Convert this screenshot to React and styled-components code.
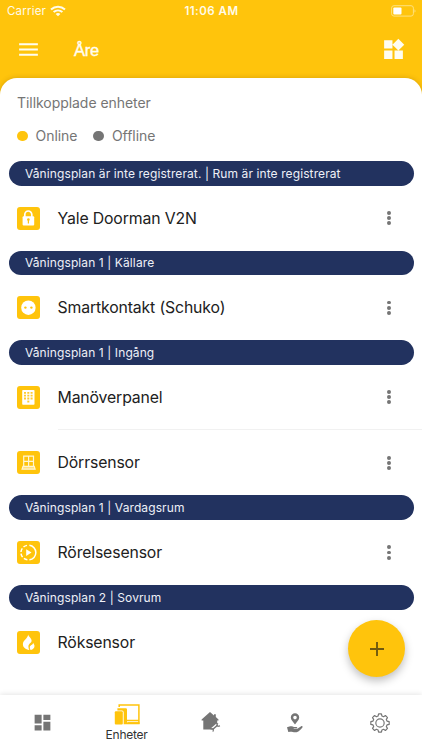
import React from 'react'
import styled, { createGlobalStyle } from 'styled-components'
import { MdMenu, MdWidgets, MdDashboard } from 'react-icons/md'

const GlobalStyle = createGlobalStyle`
    * {
        box-sizing: border-box;
    }
    body {
        margin: 0;
        background-color: #ffc40c;
        font-family: Inter, "Liberation Sans", sans-serif;
    }
`

const Container = styled.div`
    position: relative;
    display: flex;
    flex-direction: column;
    width: 422px;
    height: 750px;
    overflow: hidden;
    background-color: #ffc40c;
`

const StatusBar = styled.div`
    display: grid;
    grid-template-columns: 1fr auto 1fr;
    align-items: center;
    height: 22px;
    padding: 0 6px 0 7px;
    color: #fffbea;
`

const Carrier = styled.div`
    display: flex;
    align-items: center;
    gap: 4px;
    font-size: 11.5px;
    letter-spacing: 0.2px;
`

const Clock = styled.div`
    font-size: 11.5px;
    font-weight: 600;
    letter-spacing: 0.5px;
`

const Battery = styled.div`
    display: flex;
    justify-content: flex-end;
`

const Header = styled.div`
    display: flex;
    align-items: center;
    height: 56px;
    padding: 0 16px 1px;
    color: #fffdf2;
`

const Title = styled.h1`
    flex: 1;
    margin: 2px 0 0 33px;
    font-family: "Liberation Sans", sans-serif;
    font-size: 16.5px;
    font-weight: 400;
    letter-spacing: -0.3px;
    -webkit-text-stroke: 0.4px #fffdf2;
`

const Panel = styled.div`
    flex: 1;
    background-color: #fff;
    border-radius: 17px 17px 0 0;
    box-shadow: 0 0 5px rgba(120, 80, 0, 0.3);
`

const Intro = styled.div`
    height: 83px;
    padding: 16px 17px 0;
    color: #757575;
    font-size: 14px;
    line-height: 18px;
`

const IntroTitle = styled.div`
    letter-spacing: -0.05px;
`

const Legend = styled.div`
    display: flex;
    align-items: center;
    gap: 16px;
    margin-top: 15px;
    letter-spacing: -0.04px;
`

const LegendItem = styled.div`
    display: flex;
    align-items: center;
    gap: 8px;
`

const Dot = styled.span`
    width: 10.5px;
    height: 10.5px;
    border-radius: 50%;
    background-color: ${props => props.$color};
`

const Room = styled.div`
    display: flex;
    align-items: center;
    height: 24.5px;
    margin: 0 8.5px;
    padding: 0 16.5px;
    border-radius: 13px;
    background-color: #22325f;
    color: #eef0f7;
    font-size: 12px;
    letter-spacing: 0.1px;
    white-space: pre;
`

const Device = styled.div`
    display: flex;
    align-items: center;
    height: ${props => props.$divided ? '65.7px' : '65.1px'};
    padding-left: 17px;
`

const Tile = styled.div`
    display: flex;
    align-items: center;
    justify-content: center;
    width: 23px;
    height: 23px;
    margin-right: 17.5px;
    border-radius: 3px;
    background-color: #ffc40c;
`

const DeviceBody = styled.div`
    flex: 1;
    display: flex;
    align-items: center;
    justify-content: space-between;
    height: 100%;
    padding-right: 31px;
    border-bottom: ${props => props.$divided ? '1px solid #f1f1f1' : 'none'};
`

const DeviceName = styled.div`
    color: #212121;
    font-size: 15.8px;
    letter-spacing: -0.14px;
`

const More = styled.div`
    display: flex;
    flex-direction: column;
    gap: 1.4px;
`

const MoreDot = styled.span`
    width: 3.8px;
    height: 3.8px;
    border-radius: 50%;
    background-color: #757575;
`

const AddButton = styled.button`
    position: absolute;
    right: 17px;
    bottom: 73px;
    display: flex;
    align-items: center;
    justify-content: center;
    width: 57px;
    height: 57px;
    padding: 0;
    border: none;
    border-radius: 50%;
    background-color: #ffc40c;
    box-shadow: 0 4px 8px rgba(0, 0, 0, 0.25);
`

const TabBar = styled.div`
    position: absolute;
    left: 0;
    right: 0;
    bottom: 0;
    display: grid;
    grid-template-columns: repeat(5, 1fr);
    height: 55px;
    background-color: #fff;
    box-shadow: 0 -1px 5px rgba(0, 0, 0, 0.1);
`

const Tab = styled.div`
    display: flex;
    flex-direction: column;
    align-items: center;
    justify-content: ${props => props.$active ? 'flex-start' : 'center'};
    padding-top: ${props => props.$active ? '9px' : '0'};
    color: #757575;
`

const TabLabel = styled.div`
    margin-top: 2px;
    color: #333;
    font-size: 12px;
    line-height: 16px;
    letter-spacing: -0.25px;
`

const WifiIcon = () => (
    <svg width="16" height="12" viewBox="0 0 16 12" fill="none" stroke="currentColor" strokeWidth="2">
        <path d="M1 4.4C5 .7 11 .7 15 4.4" />
        <path d="M3.6 7.1c2.6-2.3 6.2-2.3 8.8 0" />
        <path d="M8 11.2 5.6 8.9c1.5-1.2 3.3-1.2 4.8 0z" fill="currentColor" stroke="none" />
    </svg>
)

const BatteryIcon = () => (
    <svg width="25" height="12" viewBox="0 0 25 12">
        <rect x=".6" y=".7" width="21.8" height="10.4" rx="2.4" fill="none" stroke="#ffe17d" />
        <rect x="2.3" y="2.4" width="8.2" height="7" rx="1" fill="#fff" />
        <path d="M23.5 4.2c1.3.6 1.3 2.8 0 3.4z" fill="#ffe17d" />
    </svg>
)

const LockIcon = () => (
    <svg width="23" height="23" viewBox="0 0 23 23">
        <path d="M7.8 10V7.5a3.5 3.5 0 0 1 7 0V10" fill="none" stroke="#fff" strokeWidth="1.7" />
        <rect x="5.6" y="9.3" width="11.6" height="9.2" rx="1" fill="#fff" />
        <circle cx="11.4" cy="12.6" r="1.3" fill="#ffc40c" />
        <path d="M10.8 13h1.2v3.4h-1.2z" fill="#ffc40c" />
    </svg>
)

const SocketIcon = () => (
    <svg width="23" height="23" viewBox="0 0 23 23">
        <circle cx="11.4" cy="11.7" r="7.2" fill="#fff" />
        <circle cx="8.4" cy="11.6" r="1.2" fill="#ffc40c" />
        <circle cx="14.4" cy="11.6" r="1.2" fill="#ffc40c" />
    </svg>
)

const KeypadIcon = () => (
    <svg width="23" height="23" viewBox="0 0 23 23">
        <rect x="5.2" y="4" width="12.3" height="14.7" rx=".8" fill="#fff" />
        {[5.9, 8.7, 11.5].map(y => (
            <path key={y} d={`M7 ${y}h2v1.9H7zM10.3 ${y}h2v1.9h-2zM13.6 ${y}h2v1.9h-2z`} fill="#ffcb2e" />
        ))}
        <path d="M10.3 14.6h2v1.9h-2z" fill="#ffcb2e" />
    </svg>
)

const WindowIcon = () => (
    <svg width="23" height="23" viewBox="0 0 23 23" fill="none" stroke="#fff6d6" strokeWidth="1.2">
        <path d="M6.7 15.4V5.2h9.8v10.2M11.6 5.2v10M6.7 10.3h9.8" />
        <path d="M6 15.4h11.2l.9 2.8H5.1z" fill="#ffe082" />
    </svg>
)

const MotionIcon = () => (
    <svg width="23" height="23" viewBox="0 0 23 23">
        <path d="M12.4 4.3a7.3 7.3 0 0 1 0 14.5" fill="none" stroke="#fff" strokeWidth="1.5" />
        <path d="M10.4 18.8a7.3 7.3 0 0 1 0-14.5" fill="none" stroke="#fff" strokeWidth="1.5" strokeDasharray="3.8 1.7" />
        <path d="M9.2 8.2v6.8l5.3-3.4z" fill="#fff" />
    </svg>
)

const FireIcon = () => (
    <svg width="23" height="23" viewBox="0 0 23 23" fill="#fff">
        <path d="M11.2 3.6c.5 2.6 3.4 3.4 3.4 6.2 0 2.1-3.2 3-3.2 5.6 0 1.2.3 2.4.9 3.5-3.7-.5-6.4-2.6-6.4-5.7 0-4 4.700-5.200 5.300-9.600z" />
        <path d="M16.200 11.800c.2 1.300 1.300 1.800 1.300 3.300 0 2.100-1.600 3.500-3.700 3.800-.8-.8-1-1.600-1-2.500 0-2.200 3.100-2.300 3.400-4.600z" />
    </svg>
)

const DevicesIcon = () => (
    <svg width="26" height="21" viewBox="0 0 26 21">
        <path d="M5.2 3V1.1h19.7v18H14" fill="none" stroke="#ffc40c" strokeWidth="1.5" />
        <path d="M13 15.8h12v1.4H13zM13 18.2h12.6v2H13z" fill="#ffc40c" />
        <path d="M3.4 4.3h8.4q1.2 0 1.2 1.2v14.8H9.7V8.4Q9.7 6.4 8 6.4H3.4z" fill="#ffc40c" />
        <rect x=".8" y="7.3" width="8" height="13.1" rx="1" fill="#ffc40c" />
    </svg>
)

const HomeRepairIcon = () => (
    <svg width="20" height="21" viewBox="0 0 20 21">
        <path d="M9 0l4 3.500V2.200h1.800v2.900l2.700 2.500v1h-1.300v3.600l-4.600 5.300H2.300V8.600H.6v-1z" fill="#757575" />
        <path d="M11.600 17.500l4.900-4.300" stroke="#fff" strokeWidth="4" />
        <path d="M11.600 17.500l4.900-4.300" stroke="#757575" strokeWidth="1.500" />
        <path d="M16.800 11.200l-.9 1.900 1.100 1.200 2-.5M9.500 17l1.800-.4 1.100 1.300-.5 1.800" fill="none" stroke="#757575" strokeWidth="1.200" />
    </svg>
)

const LocationHandIcon = () => (
    <svg width="18" height="20" viewBox="0 0 18 20">
        <path fillRule="evenodd" d="M9 .3a4.2 4.2 0 0 0-4.2 4.2c0 2.5 2.1 4 4.2 7 2.1-3 4.2-4.5 4.2-7A4.2 4.2 0 0 0 9 .3zm0 2.5a1.8 1.8 0 1 1 0 3.6 1.8 1.8 0 0 1 0-3.6z" fill="#757575" />
        <path d="M1 14.2l3.2-.9c1.8-.4 2.5.3 3.8.6h2.5c1 0 1 1.3 0 1.4H7.7v.5h3.6l3.9-2.5c1-.6 1.9.4 1.2 1.2-1.7 2-3.2 4-5.8 4.7-2.6.5-4.6-.7-6.4-.5L2.3 19z" fill="#757575" />
    </svg>
)

const GearIcon = () => (
    <svg width="20" height="20" viewBox="0 0 24 24" fill="none" stroke="#757575" strokeWidth="1.4" strokeLinejoin="round">
        <circle cx="12" cy="12" r="5" />
        <path d="M10.3 1h3.4l.6 2.6 2 .8 2.2-1.4 2.5 2.5-1.4 2.2.8 2 2.6.6v3.4l-2.6.6-.8 2 1.4 2.2-2.5 2.5-2.2-1.4-2 .8-.6 2.6h-3.4l-.6-2.6-2-.8L5.5 21 3 18.5l1.4-2.2-.8-2L1 13.7v-3.4l2.6-.6.8-2L3 5.5 5.5 3l2.2 1.4 2-.8z" />
    </svg>
)

const PlusIcon = () => (
    <svg width="14" height="14" viewBox="0 0 14 14">
        <path d="M7 0v14M0 7h14" stroke="#70590f" strokeWidth="1.9" />
    </svg>
)

const rooms = [
    {
        name: 'Våningsplan är inte registrerat. | Rum är inte registrerat',
        devices: [{ name: 'Yale Doorman V2N', icon: <LockIcon />, menu: true }],
    },
    {
        name: 'Våningsplan 1 | Källare',
        devices: [{ name: 'Smartkontakt (Schuko)', icon: <SocketIcon />, menu: true }],
    },
    {
        name: 'Våningsplan 1 | Ingång',
        devices: [
            { name: 'Manöverpanel', icon: <KeypadIcon />, menu: true },
            { name: 'Dörrsensor', icon: <WindowIcon />, menu: true },
        ],
    },
    {
        name: 'Våningsplan 1 | Vardagsrum',
        devices: [{ name: 'Rörelsesensor', icon: <MotionIcon />, menu: true }],
    },
    {
        name: 'Våningsplan 2 | Sovrum',
        devices: [{ name: 'Röksensor', icon: <FireIcon />, menu: false }],
    },
]

const App = () => {
    return (
        <Container>
            <GlobalStyle />
            <StatusBar>
                <Carrier>Carrier <WifiIcon /></Carrier>
                <Clock>11:06 AM</Clock>
                <Battery><BatteryIcon /></Battery>
            </StatusBar>
            <Header>
                <MdMenu size={25} />
                <Title>Åre</Title>
                <MdWidgets size={25} />
            </Header>
            <Panel>
                <Intro>
                    <IntroTitle>Tillkopplade enheter</IntroTitle>
                    <Legend>
                        <LegendItem><Dot $color="#ffc40c" />Online</LegendItem>
                        <LegendItem><Dot $color="#757575" />Offline</LegendItem>
                    </Legend>
                </Intro>
                {rooms.map(room => (
                    <React.Fragment key={room.name}>
                        <Room>{room.name}</Room>
                        {room.devices.map((device, i) => {
                            const divided = i < room.devices.length - 1
                            return (
                                <Device key={device.name} $divided={divided}>
                                    <Tile>{device.icon}</Tile>
                                    <DeviceBody $divided={divided}>
                                        <DeviceName>{device.name}</DeviceName>
                                        {device.menu && <More><MoreDot /><MoreDot /><MoreDot /></More>}
                                    </DeviceBody>
                                </Device>
                            )
                        })}
                    </React.Fragment>
                ))}
            </Panel>
            <AddButton><PlusIcon /></AddButton>
            <TabBar>
                <Tab><MdDashboard size={21} /></Tab>
                <Tab $active>
                    <DevicesIcon />
                    <TabLabel>Enheter</TabLabel>
                </Tab>
                <Tab><HomeRepairIcon /></Tab>
                <Tab><LocationHandIcon /></Tab>
                <Tab><GearIcon /></Tab>
            </TabBar>
        </Container>
    )
}

export default App
